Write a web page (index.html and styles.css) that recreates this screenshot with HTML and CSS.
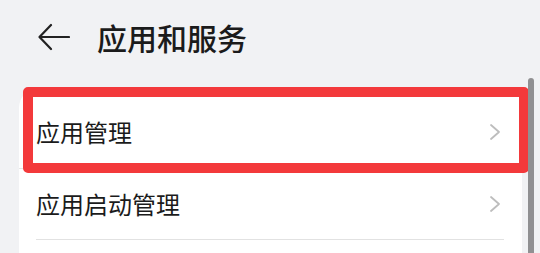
FILE: index.html
```html
<!DOCTYPE html>
<html>
  <head>
    <title>应用和服务</title>
    <link rel="stylesheet" href="styles.css">
  </head>
  <body>
    <div class="page">
      <div class="header">
        <svg class="back" width="32" height="28" viewBox="0 0 32 28">
          <path d="M13 2 L1.5 14 L13 26 M1.5 14 H31" fill="none" stroke="#222" stroke-width="2.2" stroke-linecap="round" stroke-linejoin="round"/>
        </svg>
        <div class="title">应用和服务</div>
      </div>

      <div class="card">
        <div class="row first">
          <span class="label">应用管理</span>
          <svg class="chevron" width="12" height="18" viewBox="0 0 12 18">
            <path d="M2 2 L10 9 L2 16" fill="none" stroke="#bdbdbd" stroke-width="1.8" stroke-linecap="round" stroke-linejoin="round"/>
          </svg>
          <div class="highlight"></div>
        </div>
        <div class="row second">
          <span class="label">应用启动管理</span>
          <svg class="chevron" width="12" height="18" viewBox="0 0 12 18">
            <path d="M2 2 L10 9 L2 16" fill="none" stroke="#bdbdbd" stroke-width="1.8" stroke-linecap="round" stroke-linejoin="round"/>
          </svg>
        </div>
        <div class="divider"></div>
      </div>

      <div class="scrollbar"></div>
    </div>
  </body>
</html>
```

FILE: styles.css
```css
body {
  margin: 0;
  background-color: #f1f2f4;
  font-family: "Noto Sans CJK SC", "Noto Sans", sans-serif;
  color: #1b1b1b;
}

.page {
  position: relative;
  width: 540px;
  height: 253px;
  overflow: hidden;
}

.header {
  display: flex;
  align-items: center;
  height: 73px;
  padding-left: 38px;
}

.back {
  display: block;
  margin-right: 27px;
}

.title {
  font-size: 30px;
  font-weight: 500;
  line-height: 1;
}

.card {
  margin-top: 15px;
  margin-left: 19px;
  width: 503px;
  padding-top: 8px;
  background-color: #fff;
  border-radius: 20px 20px 0 0;
  height: 200px;
}

.row {
  position: relative;
  display: flex;
  align-items: center;
  justify-content: space-between;
  height: 72px;
  padding: 0 21px 0 17px;
}

.row.first {
  border-bottom: 1px solid #e6e6e6;
}

.row.second {
  height: 70px;
}

.label {
  font-size: 24px;
  line-height: 1;
}

.chevron {
  display: block;
}

.divider {
  height: 1px;
  margin: 0 18px 0 17px;
  background-color: #e2e2e2;
}

.highlight {
  position: absolute;
  left: 4px;
  right: -7px;
  top: -9px;
  bottom: -5px;
  border: 10px solid #f3393b;
  border-radius: 5px;
}

.scrollbar {
  position: absolute;
  left: 528px;
  top: 78px;
  width: 6px;
  height: 190px;
  border-radius: 3px;
  background-color: #909092;
}
```
